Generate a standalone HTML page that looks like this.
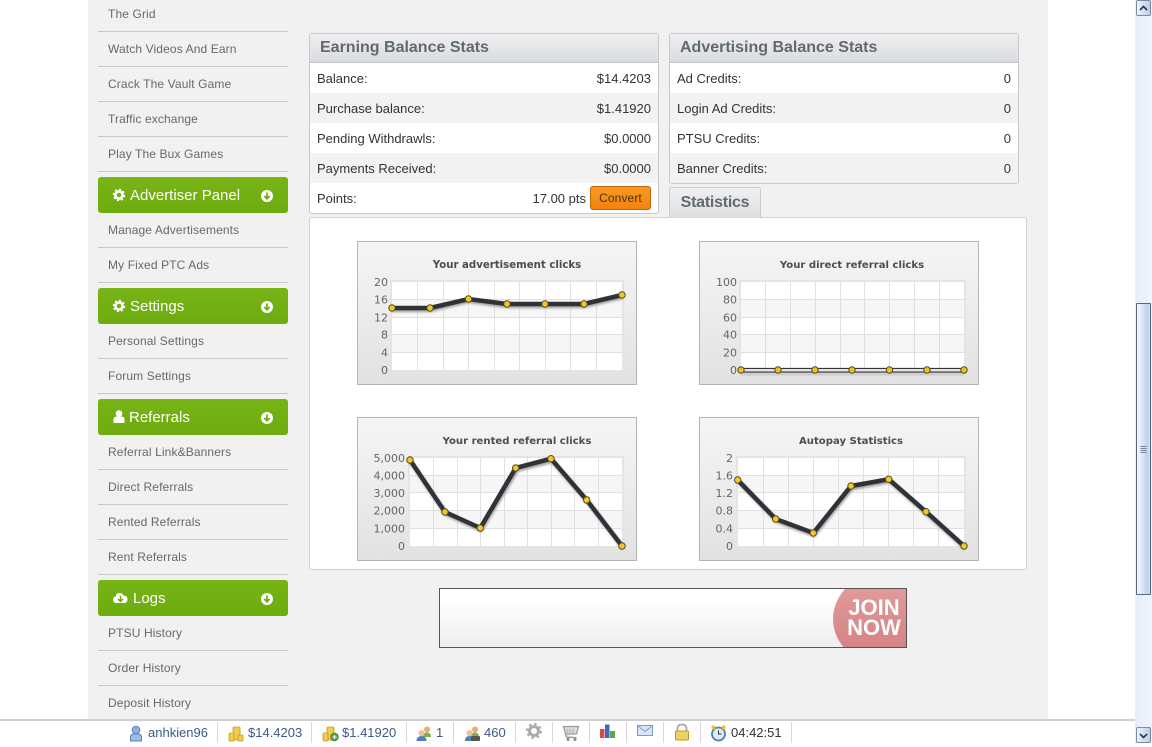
<!DOCTYPE html>
<html><head><meta charset="utf-8"><title>Dashboard</title>
<style>
html,body{margin:0;padding:0;background:#fff;}
body{width:1152px;height:743px;overflow:hidden;position:relative;font-family:"Liberation Sans",Arial,sans-serif;}
.a{position:absolute;}
#bg{left:88px;top:0;width:960px;height:720px;background:#f1f1f1;}
.it{position:absolute;left:98px;width:190px;height:34px;border-bottom:1px solid #c6c9cc;}
.it span{position:absolute;left:10px;font-size:12px;line-height:16px;color:#686868;letter-spacing:.12px;white-space:nowrap;}
.gb{position:absolute;left:98px;width:190px;height:36px;border-radius:3px;background:linear-gradient(#78b416,#6dab0f);}
.gb span{position:absolute;top:9px;font-size:15px;line-height:19px;color:#fff;white-space:nowrap;}
.gb svg{position:absolute;left:0;top:0;}
.panel{position:absolute;top:33px;width:348px;border:1px solid #c8c8c8;border-radius:3px;background:#fff;overflow:hidden;}
.ph{height:28px;border-bottom:1px solid #c4c6c9;background:linear-gradient(#f0f0f2,#d9dbde);font-weight:bold;font-size:16px;line-height:28px;color:#626a71;padding-left:10px;}
.r{position:relative;height:30px;line-height:31px;font-size:13px;color:#333;padding:0 7px;}
.r b{position:absolute;right:7px;top:0;font-weight:normal;}
#btn{position:absolute;left:590px;top:186px;width:59px;height:22px;border:1px solid #c2660c;border-radius:3px;background:linear-gradient(#fb9a20,#f28310);font-size:12px;line-height:23px;text-align:center;color:#4a3410;letter-spacing:.1px;}
#tab{position:absolute;left:669px;top:187px;width:90px;height:30px;border:1px solid #ccc;border-bottom:none;border-radius:3px 3px 0 0;background:linear-gradient(#f0f0f2,#dcdee0);font-weight:bold;font-size:16px;line-height:29px;text-align:center;color:#626a71;letter-spacing:-.25px;}
#st{position:absolute;left:309px;top:217px;width:716px;height:351px;border:1px solid #d0d0d0;border-radius:3px;background:#fff;}
#ban{position:absolute;left:439px;top:588px;width:466px;height:58px;border:1px solid #555;background:linear-gradient(#fff 15%,#eee);overflow:hidden;}
#ban i{position:absolute;left:393px;top:-20px;width:120px;height:100px;border-radius:50%;background:linear-gradient(#e09a9a 20%,#d68283 80%);}
#ban span{position:absolute;left:406px;top:9px;font-weight:bold;font-size:22px;line-height:20px;color:#fff;text-align:center;width:56px;}
#barline{left:0;top:719px;width:1135px;height:2px;background:#cfcfcf;}
#bar{left:0;top:721px;width:1135px;height:22px;background:#fff;}
.sep{position:absolute;top:722px;width:1px;height:21px;background:#d8d8d8;}
.bt{position:absolute;top:724px;font-size:13px;line-height:17px;color:#3a5a88;white-space:nowrap;}
#sb{left:1135px;top:0;width:17px;height:743px;background:linear-gradient(90deg,#e3edfb,#f0f5fd);}
.sbb{position:absolute;left:1px;width:13px;height:14px;border:1px solid #7d8ba0;border-radius:2px;background:linear-gradient(90deg,#eef3fb,#bccde6);}
#th{position:absolute;left:1px;top:303px;width:13px;height:290px;border:1px solid #56667c;border-radius:1px;background:linear-gradient(90deg,#f3f7fd,#dce8f8 40%,#bcd1ec 80%,#d4e2f4);}
svg text{font-family:"DejaVu Sans",Verdana,sans-serif;}
</style></head>
<body>
<div class="a" id="bg"></div>

<div class="it" style="top:-3px"><span style="top:9px">The Grid</span></div>
<div class="it" style="top:32px"><span style="top:9px">Watch Videos And Earn</span></div>
<div class="it" style="top:67px"><span style="top:9px">Crack The Vault Game</span></div>
<div class="it" style="top:102px"><span style="top:9px">Traffic exchange</span></div>
<div class="it" style="top:137px"><span style="top:9px">Play The Bux Games</span></div>
<div class="gb" style="top:177px"><svg width="190" height="36"><circle cx="21" cy="18" r="3.6" fill="none" stroke="#fff" stroke-width="2.6"/><circle cx="21" cy="18" r="5.4" fill="none" stroke="#fff" stroke-width="1.6" stroke-dasharray="2.2 2"/><circle cx="169" cy="19" r="6" fill="#fff"/><path d="M169 15.5v6M166.3 19l2.7 2.8 2.7-2.8" fill="none" stroke="#6dab0f" stroke-width="1.7"/></svg><span style="left:32px">Advertiser Panel</span></div>
<div class="it" style="top:213px"><span style="top:9px">Manage Advertisements</span></div>
<div class="it" style="top:248px"><span style="top:9px">My Fixed PTC Ads</span></div>
<div class="gb" style="top:288px"><svg width="190" height="36"><circle cx="21" cy="18" r="3.6" fill="none" stroke="#fff" stroke-width="2.6"/><circle cx="21" cy="18" r="5.4" fill="none" stroke="#fff" stroke-width="1.6" stroke-dasharray="2.2 2"/><circle cx="169" cy="19" r="6" fill="#fff"/><path d="M169 15.5v6M166.3 19l2.7 2.8 2.7-2.8" fill="none" stroke="#6dab0f" stroke-width="1.7"/></svg><span style="left:32px">Settings</span></div>
<div class="it" style="top:324px"><span style="top:9px">Personal Settings</span></div>
<div class="it" style="top:359px"><span style="top:9px">Forum Settings</span></div>
<div class="gb" style="top:399px"><svg width="190" height="36"><circle cx="21" cy="14.5" r="3.3" fill="#fff"/><path d="M15.5 24v-3.5q0-3 3-3h5q3 0 3 3V24z" fill="#fff"/><circle cx="169" cy="19" r="6" fill="#fff"/><path d="M169 15.5v6M166.3 19l2.7 2.8 2.7-2.8" fill="none" stroke="#6dab0f" stroke-width="1.7"/></svg><span style="left:31px">Referrals</span></div>
<div class="it" style="top:435px"><span style="top:9px">Referral Link&amp;Banners</span></div>
<div class="it" style="top:470px"><span style="top:9px">Direct Referrals</span></div>
<div class="it" style="top:505px"><span style="top:9px">Rented Referrals</span></div>
<div class="it" style="top:540px"><span style="top:9px">Rent Referrals</span></div>
<div class="gb" style="top:580px"><svg width="190" height="36"><path d="M18.5 23q-3.5 0-3.5-3.2 0-2.6 2.6-3.2.5-3.6 4-3.6 2.9 0 3.8 2.6 4-.2 4.1 3.8 0 3.6-3.5 3.6z" fill="#fff"/><path d="M22.5 16v5M20 19l2.5 2.5L25 19" fill="none" stroke="#6dab0f" stroke-width="1.5"/><circle cx="169" cy="19" r="6" fill="#fff"/><path d="M169 15.5v6M166.3 19l2.7 2.8 2.7-2.8" fill="none" stroke="#6dab0f" stroke-width="1.7"/></svg><span style="left:35px">Logs</span></div>
<div class="it" style="top:616px"><span style="top:9px">PTSU History</span></div>
<div class="it" style="top:651px"><span style="top:9px">Order History</span></div>
<div class="it" style="top:686px;border:none"><span style="top:9px">Deposit History</span></div>

<div class="panel" style="left:309px;height:179px">
<div class="ph">Earning Balance Stats</div>
<div><div class="r" style="background:#fff">Balance:<b>$14.4203</b></div><div class="r" style="background:#f2f2f2">Purchase balance:<b>$1.41920</b></div><div class="r" style="background:#fff">Pending Withdrawls:<b>$0.0000</b></div><div class="r" style="background:#f2f2f2">Payments Received:<b>$0.0000</b></div><div class="r" style="background:#fff">Points:<b style="right:72px">17.00 pts</b></div></div>
</div>
<div id="btn">Convert</div>
<div class="panel" style="left:669px;height:149px">
<div class="ph">Advertising Balance Stats</div>
<div><div class="r" style="background:#fff">Ad Credits:<b>0</b></div><div class="r" style="background:#f2f2f2">Login Ad Credits:<b>0</b></div><div class="r" style="background:#fff">PTSU Credits:<b>0</b></div><div class="r" style="background:#f2f2f2">Banner Credits:<b>0</b></div></div>
</div>
<div id="st"></div>
<div id="tab">Statistics</div>

<svg class="a" style="left:0;top:0" width="1152" height="743" viewBox="0 0 1152 743">
<defs>
<linearGradient id="cg" x1="0" y1="0" x2="0" y2="1"><stop offset="0" stop-color="#f5f5f5"/><stop offset="1" stop-color="#e2e2e2"/></linearGradient>
<filter id="sh" x="-10%" y="-30%" width="120%" height="160%"><feGaussianBlur stdDeviation="1.2"/></filter>
</defs>

<!-- chart 1 -->
<rect x="357.5" y="241.5" width="279" height="143" fill="url(#cg)" stroke="#b4b4b4"/>
<rect x="391" y="281" width="232" height="90" fill="none" stroke="#e4e4e4" stroke-width="2"/>
<rect x="392" y="282" width="230" height="88" fill="#fff"/>
<path d="M392 299h230v18H392zM392 334h230v18H392z" fill="#f6f6f6"/>
<path d="M392 299.500h230M392 317.500h230M392 334.500h230M392 352.500h230M417.500 282v88M443.500 282v88M468.500 282v88M494.500 282v88M519.500 282v88M545.500 282v88M570.500 282v88M596.500 282v88" stroke="#e0e0e0" fill="none"/>
<polyline points="392,310 430,310 468.5,301 507,306 545,306 584,306 622,297" fill="none" stroke="#999" stroke-width="4" filter="url(#sh)"/>
<polyline points="392,308 430,308 468.5,299 507,304 545,304 584,304 622,295" fill="none" stroke="#2f3237" stroke-width="4.5"/>
<g fill="#f0c82e" stroke="#5c4c14"><circle cx="392" cy="308" r="3.2"/><circle cx="430" cy="308" r="3.2"/><circle cx="468.500" cy="299" r="3.2"/><circle cx="507" cy="304" r="3.2"/><circle cx="545" cy="304" r="3.2"/><circle cx="584" cy="304" r="3.2"/><circle cx="622" cy="295" r="3.2"/></g>
<text x="507" y="268" font-size="10.2" font-weight="bold" fill="#4c4c4c" text-anchor="middle">Your advertisement clicks</text>
<g font-size="11" fill="#666" text-anchor="end"><text x="388" y="286">20</text><text x="388" y="303.500">16</text><text x="388" y="321.500">12</text><text x="388" y="338.500">8</text><text x="388" y="356.500">4</text><text x="388" y="374">0</text></g>

<!-- chart 2 -->
<rect x="699.5" y="241.5" width="279" height="143" fill="url(#cg)" stroke="#b4b4b4"/>
<rect x="740" y="281" width="225" height="90" fill="none" stroke="#e4e4e4" stroke-width="2"/>
<rect x="741" y="282" width="223" height="88" fill="#fff"/>
<path d="M741 299h223v18H741zM741 334h223v18H741z" fill="#f6f6f6"/>
<path d="M741 299.500h223M741 317.500h223M741 334.500h223M741 352.500h223M765.500 282v88M790.500 282v88M815.500 282v88M840.500 282v88M864.500 282v88M889.500 282v88M914.500 282v88M939.500 282v88" stroke="#e0e0e0" fill="none"/>
<rect x="741" y="373" width="223" height="2" fill="#bbb" filter="url(#sh)"/>
<path d="M741 368.500h223M741 372h223" stroke="#33363a" stroke-width="1.3" fill="none"/>
<rect x="741" y="369.3" width="223" height="2" fill="#e8e8e8"/>
<g fill="#e8c02a" stroke="#5c4c14"><circle cx="741" cy="370" r="3.2"/><circle cx="778" cy="370" r="3.2"/><circle cx="815" cy="370" r="3.2"/><circle cx="852" cy="370" r="3.2"/><circle cx="889.500" cy="370" r="3.2"/><circle cx="927" cy="370" r="3.2"/><circle cx="964" cy="370" r="3.2"/></g>
<text x="852" y="268" font-size="10.1" font-weight="bold" fill="#4c4c4c" text-anchor="middle">Your direct referral clicks</text>
<g font-size="11" fill="#666" text-anchor="end"><text x="737" y="286">100</text><text x="737" y="303.500">80</text><text x="737" y="321.500">60</text><text x="737" y="338.500">40</text><text x="737" y="356.500">20</text><text x="737" y="374">0</text></g>

<!-- chart 3 -->
<rect x="357.5" y="417.5" width="279" height="143" fill="url(#cg)" stroke="#b4b4b4"/>
<rect x="409" y="457" width="214" height="90" fill="none" stroke="#e4e4e4" stroke-width="2"/>
<rect x="410" y="458" width="212" height="88" fill="#fff"/>
<path d="M410 475h212v18H410zM410 510h212v18H410z" fill="#f6f6f6"/>
<path d="M410 475.500h212M410 492.500h212M410 510.500h212M410 528.500h212M433.500 458v88M457.500 458v88M480.500 458v88M504.500 458v88M527.500 458v88M551.500 458v88M574.500 458v88M598.500 458v88" stroke="#e0e0e0" fill="none"/>
<polyline points="411,462 446,514 481,530 517,470 552,461 588,502 623,548" fill="none" stroke="#999" stroke-width="4" filter="url(#sh)"/>
<polyline points="410,460 445,512 480.3,528 515.7,468 551,458.7 586.7,500 622,546" fill="none" stroke="#2f3237" stroke-width="4.5"/>
<g fill="#f0c82e" stroke="#5c4c14"><circle cx="410" cy="460" r="3.2"/><circle cx="445" cy="512" r="3.2"/><circle cx="480.300" cy="528" r="3.2"/><circle cx="515.700" cy="468" r="3.2"/><circle cx="551" cy="458.700" r="3.2"/><circle cx="586.700" cy="500" r="3.2"/><circle cx="622" cy="546" r="3.2"/></g>
<text x="517" y="444" font-size="10.1" font-weight="bold" fill="#4c4c4c" text-anchor="middle">Your rented referral clicks</text>
<g font-size="11" fill="#666" text-anchor="end"><text x="405" y="462">5,000</text><text x="405" y="479.500">4,000</text><text x="405" y="497">3,000</text><text x="405" y="514.500">2,000</text><text x="405" y="532.500">1,000</text><text x="405" y="550">0</text></g>

<!-- chart 4 -->
<rect x="699.5" y="417.5" width="279" height="143" fill="url(#cg)" stroke="#b4b4b4"/>
<rect x="737" y="457" width="228" height="90" fill="none" stroke="#e4e4e4" stroke-width="2"/>
<rect x="738" y="458" width="226" height="88" fill="#fff"/>
<path d="M738 475h226v18H738zM738 510h226v18H738z" fill="#f6f6f6"/>
<path d="M738 475.500h226M738 492.500h226M738 510.500h226M738 528.500h226M763.500 458v88M788.500 458v88M813.500 458v88M838.500 458v88M863.500 458v88M888.500 458v88M913.500 458v88M938.500 458v88" stroke="#e0e0e0" fill="none"/>
<polyline points="739,482 777,521 814,535 852,488 890,481 927,514 965,548" fill="none" stroke="#999" stroke-width="4" filter="url(#sh)"/>
<polyline points="737.7,480 775.7,519 813.3,533 851,486 888.7,479.3 926,511.7 964,546" fill="none" stroke="#2f3237" stroke-width="4.5"/>
<g fill="#f0c82e" stroke="#5c4c14"><circle cx="737.700" cy="480" r="3.2"/><circle cx="775.700" cy="519" r="3.2"/><circle cx="813.300" cy="533" r="3.2"/><circle cx="851" cy="486" r="3.2"/><circle cx="888.700" cy="479.300" r="3.2"/><circle cx="926" cy="511.700" r="3.2"/><circle cx="964" cy="546" r="3.2"/></g>
<text x="851" y="444" font-size="10.1" font-weight="bold" fill="#4c4c4c" text-anchor="middle">Autopay Statistics</text>
<g font-size="11" fill="#666" text-anchor="end"><text x="733" y="462">2</text><text x="733" y="479.500">1.6</text><text x="733" y="497">1.2</text><text x="733" y="514.500">0.8</text><text x="733" y="532.500">0.4</text><text x="733" y="550">0</text></g>
</svg>

<div id="ban"><i></i><span>JOIN NOW</span></div>

<div class="a" id="barline"></div>
<div class="a" id="bar"></div>
<div class="sep" style="left:217px"></div><div class="sep" style="left:311px"></div><div class="sep" style="left:406px"></div><div class="sep" style="left:453px"></div><div class="sep" style="left:515px"></div><div class="sep" style="left:552px"></div><div class="sep" style="left:589px"></div><div class="sep" style="left:626px"></div><div class="sep" style="left:663px"></div><div class="sep" style="left:700px"></div><div class="sep" style="left:791px"></div>
<div class="bt" style="left:148px">anhkien96</div>
<div class="bt" style="left:248px">$14.4203</div>
<div class="bt" style="left:342px">$1.41920</div>
<div class="bt" style="left:436px">1</div>
<div class="bt" style="left:484px">460</div>
<div class="bt" style="left:731px;color:#333">04:42:51</div>
<svg class="a" style="left:120px;top:720px" width="680" height="23" viewBox="120 720 680 23">
<!-- user -->
<circle cx="136" cy="730" r="3.8" fill="#8fb0e0" stroke="#5c7fb8"/><path d="M130.500 741v-3.500q0-3.500 3-3.500h5q3 0 3 3.500v3.500z" fill="#9dbce8" stroke="#5c7fb8"/>
<!-- coins -->
<g fill="#f0cd50" stroke="#c49a20" stroke-width=".8"><rect x="233" y="727" width="7" height="13" rx="1"/><rect x="229" y="733" width="5" height="8" rx="1"/><rect x="238" y="735" width="5" height="6" rx="1"/></g>
<g fill="#f0cd50" stroke="#c49a20" stroke-width=".8"><rect x="327" y="727" width="7" height="13" rx="1"/><rect x="323" y="733" width="5" height="8" rx="1"/></g><circle cx="334.500" cy="737" r="3.8" fill="#5aa64a" stroke="#3c7c30" stroke-width=".8"/><path d="M332.500 737h4M334.500 735v4" stroke="#fff"/>
<!-- people -->
<circle cx="427" cy="729.500" r="3" fill="#e8b070"/><path d="M423 737q0-4.500 4-4.500t4 4.500z" fill="#7cb050"/><circle cx="421.500" cy="733" r="3" fill="#f0c090"/><path d="M416.500 741q0-5 5-5t5 5z" fill="#4f80c0"/>
<circle cx="475" cy="729.500" r="3" fill="#e8b070"/><path d="M471 737q0-4.500 4-4.500t4 4.500z" fill="#7cb050"/><circle cx="469.500" cy="733" r="3" fill="#f0c090"/><path d="M465 741q0-5 4.500-5t4.500 5z" fill="#4f80c0"/><rect x="471" y="736" width="9" height="5" rx="1" fill="#555"/>
<!-- gear -->
<circle cx="534" cy="731" r="4.500" fill="none" stroke="#aaa" stroke-width="3"/><circle cx="534" cy="731" r="7" fill="none" stroke="#aaa" stroke-width="2" stroke-dasharray="2.500 3"/>
<!-- cart -->
<path d="M563.500 726.500h15l-2 7.500h-11zM565.500 734.500l1 3h10" fill="#ddd" stroke="#999" stroke-width="1.2"/><path d="M567 729v4M570 729v4M573 729v4" stroke="#aaa"/><circle cx="568" cy="739.500" r="1.5" fill="#888"/><circle cx="575" cy="739.500" r="1.5" fill="#888"/>
<!-- bars -->
<rect x="600" y="729" width="4.500" height="9" fill="#d84a4a"/><rect x="605" y="724.500" width="4.500" height="13.500" fill="#4068c0"/><rect x="610" y="731" width="5" height="7" fill="#58a848"/>
<!-- mail -->
<rect x="637.500" y="725.500" width="15" height="10" fill="#d6e6f8" stroke="#7c9cc8"/><path d="M638 726l7 5.500 7-5.500" fill="none" stroke="#7c9cc8"/>
<!-- lock -->
<path d="M677.500 731v-2.500q0-4 4.500-4t4.500 4v2.500" fill="none" stroke="#a8a8a8" stroke-width="1.8"/><rect x="675.500" y="731" width="13" height="9" rx="1" fill="#f0d060" stroke="#c49a20"/>
<!-- clock -->
<circle cx="718.500" cy="734" r="6.500" fill="#dcecf8" stroke="#4a80b0" stroke-width="1.8"/><path d="M718.500 730.500v3.500h3" fill="none" stroke="#333"/><circle cx="713.500" cy="727.500" r="2" fill="#e8b840"/><circle cx="723.500" cy="727.500" r="2" fill="#e8b840"/>
</svg>

<div class="a" id="sb">
<div class="sbb" style="top:0"><svg width="13" height="14"><path d="M3 9l3.500-3.500L10 9" fill="none" stroke="#2f3f58" stroke-width="1.8"/></svg></div>
<div id="th"><svg width="13" height="290"><path d="M3.500 142.500h6M3.500 144.500h6M3.500 146.500h6M3.500 148.500h6" stroke="#7a8698"/></svg></div>
<div class="sbb" style="top:727px"><svg width="13" height="14"><path d="M3 6l3.500 3.500L10 6" fill="none" stroke="#2f3f58" stroke-width="1.8"/></svg></div>
</div>
</body></html>
